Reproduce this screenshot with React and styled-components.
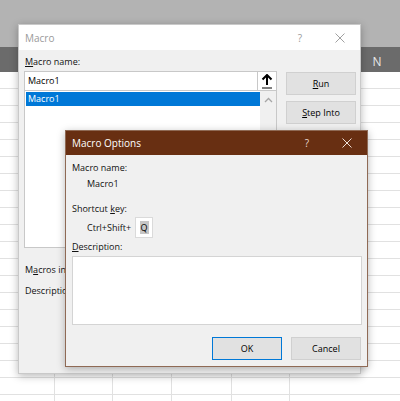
import React from "react";
import styled, { createGlobalStyle } from "styled-components";

const Global = createGlobalStyle`
  html, body { margin: 0; padding: 0; background: #fff; }
  body { overflow: hidden; font-family: "Open Sans", "Noto Sans", sans-serif; }
  * { box-sizing: border-box; }
`;

const Page = styled.div`
  position: relative;
  width: 400px;
  height: 401px;
  overflow: hidden;
  display: flex;
  flex-direction: column;
  background: #fff;
`;

const TopBand = styled.div`
  height: 47px;
  background: #b3b3b3;
  flex: none;
`;

const HeaderRow = styled.div`
  height: 25px;
  background: #6b6b6b;
  flex: none;
  display: flex;
  justify-content: flex-end;
  align-items: center;
`;

const ColLabel = styled.div`
  width: 46px;
  text-align: center;
  color: #e8e8e8;
  font-size: 12px;
  padding-top: 4px;
`;

const Sheet = styled.div`
  flex: 1;
  display: flex;
  flex-direction: column;
`;

const SheetRow = styled.div`
  height: 17px;
  display: flex;
  flex: none;
`;

const Cell = styled.div`
  width: ${(p) => p.$w}px;
  flex: none;
  border-bottom: 1px solid #e1e1e1;
  border-right: ${(p) => (p.$last ? "none" : "1px solid #e1e1e1")};
`;

const Dialog = styled.div`
  position: absolute;
  left: ${(p) => p.$x}px;
  top: ${(p) => p.$y}px;
  width: ${(p) => p.$w}px;
  height: ${(p) => p.$h}px;
  display: flex;
  flex-direction: column;
  background: #f0f0f0;
  border: 1px solid ${(p) => p.$border};
  box-shadow: 0 2px 8px rgba(0, 0, 0, 0.28);
`;

const TitleBar = styled.div`
  height: ${(p) => p.$h}px;
  flex: none;
  display: flex;
  align-items: center;
  padding-left: 6px;
  background: ${(p) => p.$bg};
  color: ${(p) => p.$fg};
  font-size: 10px;
`;

const TitleText = styled.div`
  flex: 1;
`;

const TitleControl = styled.div`
  width: 40px;
  height: 100%;
  display: flex;
  align-items: center;
  justify-content: center;
  font-size: 10px;
  color: ${(p) => p.$fg};
`;

const Label = styled.div`
  font-size: 9px;
  color: #111;
  line-height: 14px;
  margin-left: ${(p) => p.$indent || 0}px;
  margin-top: ${(p) => p.$mt || 0}px;
  white-space: nowrap;
`;

/* ---- Macro dialog ---- */
const MacroBody = styled.div`
  flex: 1;
  display: grid;
  grid-template-columns: 253px 70px;
  column-gap: 9px;
  padding: 5px 0 0 5px;
`;

const LeftCol = styled.div`
  display: flex;
  flex-direction: column;
`;

const RightCol = styled.div`
  display: flex;
  flex-direction: column;
  gap: 6px;
  padding-top: 17px;
`;

const NameRow = styled.div`
  margin-top: 2px;
  display: flex;
  height: 20px;
`;

const NameInput = styled.div`
  flex: 1;
  background: #fff;
  border: 1px solid #c8c8c8;
  border-right: none;
  font-size: 9px;
  line-height: 18px;
  padding-left: 3px;
  color: #000;
`;

const ArrowButton = styled.div`
  width: 20px;
  background: #fff;
  border: 1px solid #c8c8c8;
  display: flex;
  align-items: center;
  justify-content: center;
`;

const ListBox = styled.div`
  height: 157px;
  background: #fff;
  border: 1px solid #c8c8c8;
  border-top: none;
  display: flex;
  padding: 1px 0 0 1px;
`;

const ListItems = styled.div`
  flex: 1;
`;

const ListItem = styled.div`
  height: 14px;
  background: #0078d7;
  color: #fff;
  font-size: 9px;
  line-height: 14px;
  padding-left: 2px;
`;

const ScrollTrack = styled.div`
  width: 16px;
  background: #f0f0f0;
  margin-top: -1px;
  display: flex;
  justify-content: center;
  padding-top: 6px;
`;

const Button = styled.div`
  width: 70px;
  height: 23px;
  background: #e1e1e1;
  border: 1px solid ${(p) => (p.$default ? "#0078d7" : "#d0d0d0")};
  display: flex;
  align-items: center;
  justify-content: center;
  font-size: 9px;
  color: #000;
`;

/* ---- Macro options dialog ---- */
const OptionsBody = styled.div`
  flex: 1;
  display: flex;
  flex-direction: column;
  padding: 6px 5px 0 6px;
`;

const KeyRow = styled.div`
  display: flex;
  align-items: center;
  margin-top: 1px;
  margin-left: 15px;
  gap: 4px;
`;

const KeyBox = styled.div`
  width: 18px;
  height: 21px;
  background: #fff;
  border: 1px solid #dadada;
  display: flex;
  align-items: center;
  justify-content: center;
`;

const KeySel = styled.span`
  background: #c6c6c6;
  font-size: 9px;
  line-height: 13px;
  padding: 0 1px;
  color: #000;
`;

const TextArea = styled.div`
  margin-top: 2px;
  height: 69px;
  background: #fff;
  border: 1px solid #d4d4d4;
`;

const ButtonRow = styled.div`
  display: flex;
  justify-content: flex-end;
  gap: 9px;
  margin-top: 12px;
  padding-right: 1px;
`;

const colWidths = [55, 58, 59, 60, 58, 110];

function UpArrow() {
  return (
    <svg width="12" height="15" viewBox="0 0 12 15">
      <path d="M6 1 L6 11" stroke="#000" strokeWidth="2" />
      <path d="M1.5 5.5 L6 1 L10.5 5.5" stroke="#000" strokeWidth="2" fill="none" />
      <path d="M1 14 L11 14" stroke="#000" strokeWidth="1" />
    </svg>
  );
}

function Chevron() {
  return (
    <svg width="9" height="6" viewBox="0 0 9 6">
      <path d="M1 5 L4.5 1.5 L8 5" stroke="#a6a6a6" strokeWidth="1.3" fill="none" />
    </svg>
  );
}

function CloseX({ color }) {
  return (
    <svg width="10" height="10" viewBox="0 0 10 10">
      <path d="M0.5 0.5 L9.5 9.5 M9.5 0.5 L0.5 9.5" stroke={color} strokeWidth="1" />
    </svg>
  );
}

export default function App() {
  return (
    <>
      <Global />
      <Page>
        <TopBand />
        <HeaderRow>
          <ColLabel>N</ColLabel>
        </HeaderRow>
        <Sheet>
          {Array.from({ length: 20 }).map((_, r) => (
            <SheetRow key={r}>
              {colWidths.map((w, c) => (
                <Cell key={c} $w={w} $last={c === colWidths.length - 1} />
              ))}
            </SheetRow>
          ))}
        </Sheet>

        <Dialog $x={18} $y={24} $w={343} $h={350} $border="#c9c9c9">
          <TitleBar $h={25} $bg="#ffffff" $fg="#9a9a9a">
            <TitleText>Macro</TitleText>
            <TitleControl $fg="#9a9a9a">?</TitleControl>
            <TitleControl $fg="#9a9a9a">
              <CloseX color="#a0a0a0" />
            </TitleControl>
          </TitleBar>
          <MacroBody>
            <LeftCol>
              <Label $indent={1}>
                <u>M</u>acro name:
              </Label>
              <NameRow>
                <NameInput>Macro1</NameInput>
                <ArrowButton>
                  <UpArrow />
                </ArrowButton>
              </NameRow>
              <ListBox>
                <ListItems>
                  <ListItem>Macro1</ListItem>
                </ListItems>
                <ScrollTrack>
                  <Chevron />
                </ScrollTrack>
              </ListBox>
              <Label $indent={1} $mt={15}>
                M<u>a</u>cros in:
              </Label>
              <Label $indent={1} $mt={7}>
                Description
              </Label>
            </LeftCol>
            <RightCol>
              <Button>
                <u>R</u>un
              </Button>
              <Button>
                <u>S</u>tep Into
              </Button>
            </RightCol>
          </MacroBody>
        </Dialog>

        <Dialog $x={65} $y={130} $w={303} $h={237} $border="#8f6a55">
          <TitleBar $h={24} $bg="#682f12" $fg="#ffffff">
            <TitleText>Macro Options</TitleText>
            <TitleControl $fg="#e9d9d0">?</TitleControl>
            <TitleControl $fg="#e9d9d0">
              <CloseX color="#eedfd6" />
            </TitleControl>
          </TitleBar>
          <OptionsBody>
            <Label>Macro name:</Label>
            <Label $indent={15} $mt={2}>
              Macro1
            </Label>
            <Label $mt={11}>
              Shortcut <u>k</u>ey:
            </Label>
            <KeyRow>
              <Label>Ctrl+Shift+</Label>
              <KeyBox>
                <KeySel>Q</KeySel>
              </KeyBox>
            </KeyRow>
            <Label $mt={2}>
              <u>D</u>escription:
            </Label>
            <TextArea />
            <ButtonRow>
              <Button $default>OK</Button>
              <Button>Cancel</Button>
            </ButtonRow>
          </OptionsBody>
        </Dialog>
      </Page>
    </>
  );
}
